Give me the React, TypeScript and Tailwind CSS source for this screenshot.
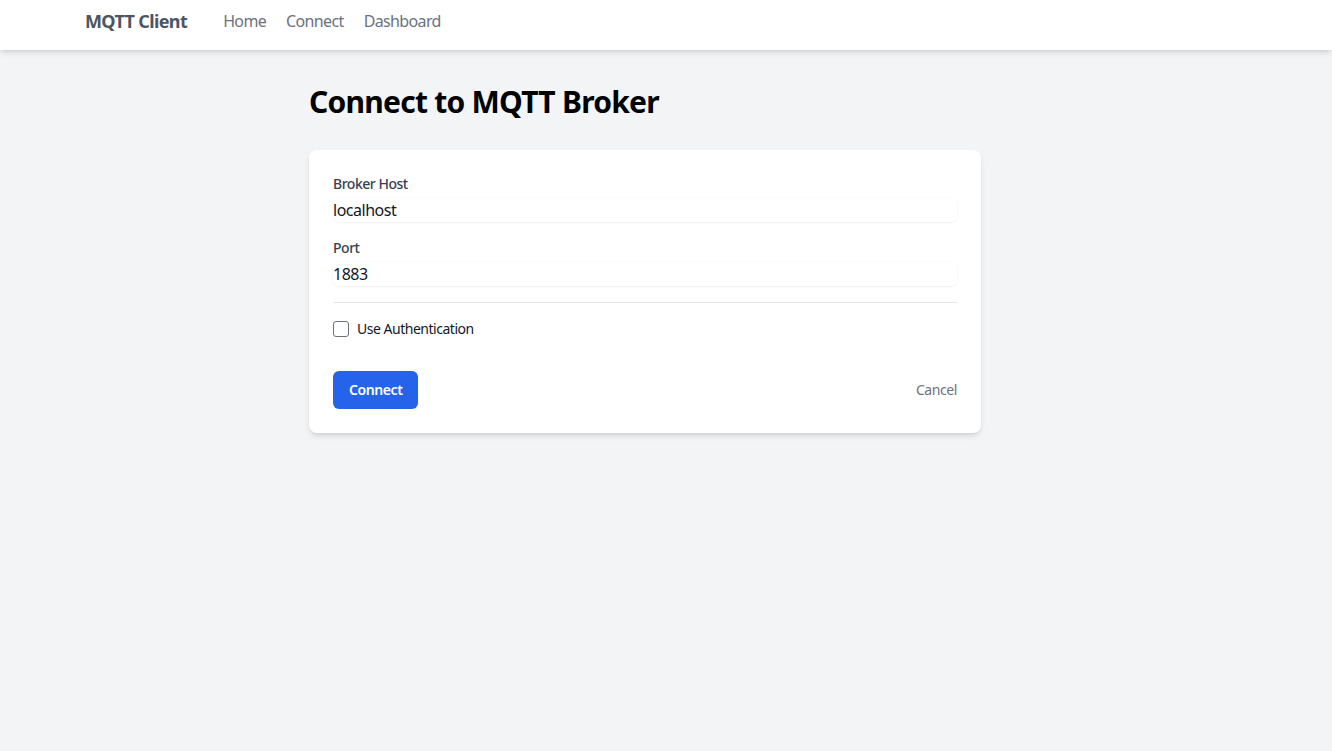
import React from "react";

export default function App() {
  return (
    <div className="min-h-[751px] bg-[#f3f4f6] font-['Noto_Sans',sans-serif] tracking-[-0.03em]">
      <nav className="h-[50px] bg-white shadow-md">
        <div className="flex items-center pl-[85px] pt-[7px]">
          <span className="text-lg font-bold text-[#4b5563] leading-7 tracking-[-0.035em]">MQTT Client</span>
          <div className="ml-9 flex gap-5 text-base text-[#6b7280] tracking-[-0.04em]">
            <a>Home</a>
            <a>Connect</a>
            <a>Dashboard</a>
          </div>
        </div>
      </nav>
      <main className="ml-[309px] w-[672px] pt-[34px]">
        <h1 className="text-3xl font-bold text-black leading-9 mb-[30px] tracking-[-0.025em]">Connect to MQTT Broker</h1>
        <div className="rounded-lg bg-white p-6 shadow-md">
          <div className="flex flex-col gap-4">
            <div>
              <label className="block text-sm font-medium text-[#374151] leading-5">Broker Host</label>
              <input
                className="mt-1 block w-full rounded-md text-base leading-6 text-[#111827] shadow-[0_0_0_1px_rgba(0,0,0,0.015),0_1px_2px_rgba(0,0,0,0.04)] outline-none tracking-[-0.03em]"
                defaultValue="localhost"
              />
            </div>
            <div>
              <label className="block text-sm font-medium text-[#374151] leading-5">Port</label>
              <input
                className="mt-1 block w-full rounded-md text-base leading-6 text-[#111827] shadow-[0_0_0_1px_rgba(0,0,0,0.015),0_1px_2px_rgba(0,0,0,0.04)] outline-none tracking-[-0.03em]"
                defaultValue="1883"
              />
            </div>
          </div>
          <div className="mt-4 border-t border-[#e5e7eb] pt-4">
            <label className="flex items-center gap-2 text-sm leading-5 text-[#111827]">
              <span className="h-4 w-4 rounded-[3px] border border-[#6b7280] bg-white" />
              Use Authentication
            </label>
          </div>
          <div className="mt-8 flex items-center justify-between">
            <button className="rounded-md bg-[#2563eb] px-4 py-[9px] text-sm font-semibold leading-5 text-white tracking-[-0.03em]">
              Connect
            </button>
            <button className="text-sm text-[#6b7280] leading-5 tracking-[-0.03em]">Cancel</button>
          </div>
        </div>
      </main>
    </div>
  );
}
